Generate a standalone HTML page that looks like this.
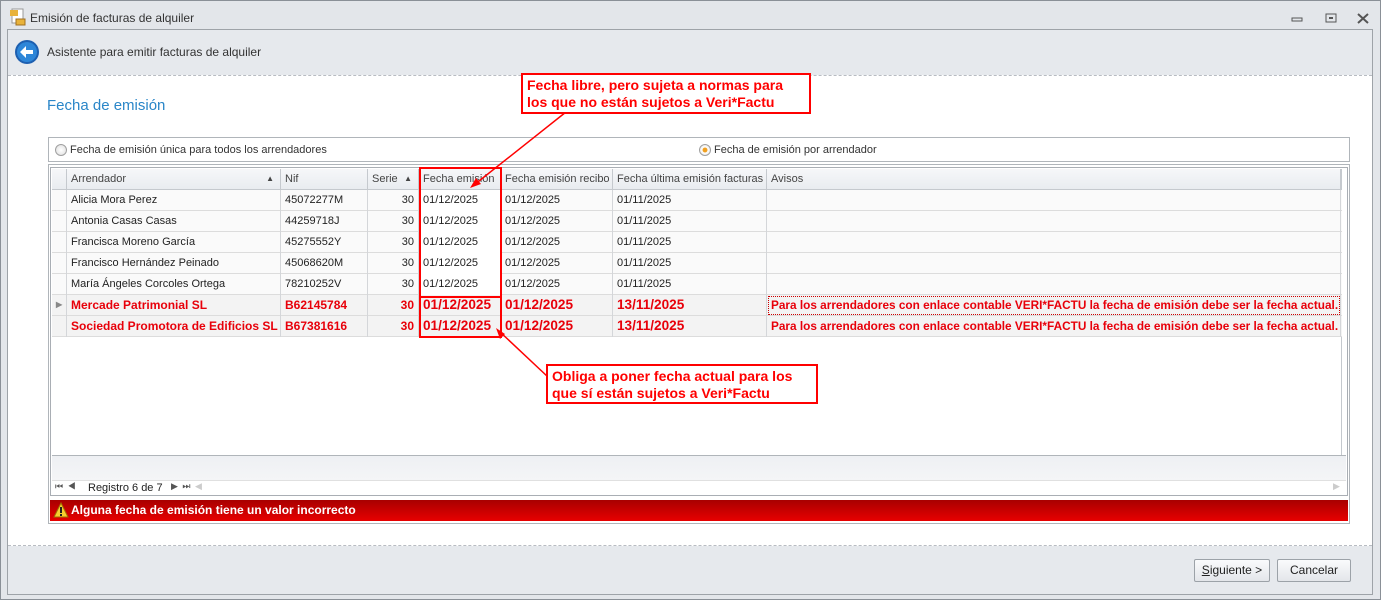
<!DOCTYPE html>
<html><head><meta charset="utf-8"><style>
*{box-sizing:border-box;margin:0;padding:0}
body{width:1381px;height:600px;overflow:hidden;background:#e6e9ed;font-family:"Liberation Sans",sans-serif;font-size:11px;color:#222;position:relative}
.abs{position:absolute}
#win{left:0;top:0;width:1381px;height:600px;border:1px solid #8a9097;background:#e3e6ea}
.title{left:30px;top:11px;font-size:12px;color:#333}
#inner{left:7px;top:29px;width:1366px;height:566px;border:1px solid #9ea3a8;background:#e6e9ed}
#content{left:8px;top:75px;width:1364px;height:471px;background:#fff;border-top:1px dashed #b8bcc2;border-bottom:1px dashed #b8bcc2}
.h1{left:47px;top:97px;font-size:15px;color:#2a86c8}
.radiobox{left:48px;top:137px;width:1302px;height:25px;border:1px solid #b0b5ba;background:#fff}
.radio{width:12px;height:12px;border-radius:50%;border:1px solid #a0a0a0;background:radial-gradient(#fff,#ddd)}
#grid{left:50px;top:167px;width:1298px;height:329px;border:1px solid #a9aeb4;background:#fff}
.hdr{left:52px;top:169px;width:1290px;height:21px;background:linear-gradient(#f6f7f9,#e9ecf0);border-bottom:1px solid #c5c9ce}
.c{position:absolute;height:21px;line-height:20px;padding-left:4px;border-right:1px solid #d4d6d9;white-space:nowrap;overflow:hidden}
.hdr .c{color:#444;border-right:1px solid #c5c9ce}
.row{position:absolute;left:52px;width:1290px;height:21px;border-bottom:1px solid #dcdcdc;background:#fafafa}
.red{color:#e8000a;font-weight:bold;background:#f3f3f3;font-size:12px}
.red .d{font-size:13.6px}
.red .av{font-size:11.8px}
.r{text-align:right;padding-right:4px}
.note{border:2px solid #f00;background:#fff;color:#f00;font-weight:bold;font-size:14px;line-height:17px;padding:2px 4px}
.btn{height:23px;border:1px solid #9ca2a8;border-radius:2px;background:linear-gradient(#fafbfc,#e3e6ea);text-align:center;line-height:21px;font-size:12px;color:#222}
</style></head><body>
<div id="win" class="abs"></div>
<svg class="abs" style="left:10px;top:8px" width="16" height="18"><rect x="2" y="1" width="11" height="14" fill="#fff" stroke="#999"/><rect x="0" y="2" width="8" height="6" fill="#e8b23a"/><rect x="6" y="11" width="9" height="6" fill="#e8b23a" stroke="#a07020"/></svg>
<div class="abs title">Emisión de facturas de alquiler</div>
<svg class="abs" style="left:1290px;top:13px" width="80" height="12"><rect x="2" y="5" width="10" height="3" fill="none" stroke="#555"/><rect x="36" y="1" width="10" height="8" fill="none" stroke="#555"/><rect x="39" y="4" width="4" height="2" fill="#555"/><path d="M68 1l10 9M78 1l-10 9" stroke="#555" stroke-width="2"/></svg>
<div id="inner" class="abs"></div>
<svg class="abs" style="left:14px;top:39px" width="26" height="26"><circle cx="13" cy="13" r="12" fill="#1d5fb0"/><circle cx="13" cy="13" r="10" fill="#2d86d8"/><path d="M6 13l6-6v4h7v4h-7v4z" fill="#fff"/></svg>
<div class="abs" style="left:47px;top:45px;font-size:12px;color:#333">Asistente para emitir facturas de alquiler</div>
<div id="content" class="abs"></div>
<div class="abs h1">Fecha de emisión</div>
<div class="abs radiobox"></div>
<div class="abs radio" style="left:55px;top:144px"></div>
<div class="abs" style="left:70px;top:144px;color:#333">Fecha de emisión única para todos los arrendadores</div>
<div class="abs radio" style="left:699px;top:144px;background:radial-gradient(#f0a020 30%,#fff 40%,#ddd)"></div>
<div class="abs" style="left:714px;top:144px;color:#333">Fecha de emisión por arrendador</div>
<div id="grid" class="abs"></div>
<div class="abs hdr">
<div class="c" style="left:0;width:15px"></div>
<div class="c" style="left:15px;width:214px">Arrendador<span style="position:absolute;right:6px;font-size:8px">▲</span></div>
<div class="c" style="left:229px;width:87px">Nif</div>
<div class="c" style="left:316px;width:51px">Serie<span style="position:absolute;right:6px;font-size:8px">▲</span></div>
<div class="c" style="left:367px;width:82px">Fecha emisión</div>
<div class="c" style="left:449px;width:112px">Fecha emisión recibo</div>
<div class="c" style="left:561px;width:154px">Fecha última emisión facturas</div>
<div class="c" style="left:715px;width:574px">Avisos</div>
</div>
<div class="abs" style="left:1341px;top:169px;width:6px;height:286px;border-left:1px solid #c5c9ce"></div>

<div class="row" style="top:190px"><div class="c" style="left:0;width:15px"></div><div class="c" style="left:15px;width:214px">Alicia Mora Perez</div><div class="c" style="left:229px;width:87px">45072277M</div><div class="c r" style="left:316px;width:51px">30</div><div class="c" style="left:367px;width:82px;background:#fff">01/12/2025</div><div class="c" style="left:449px;width:112px">01/12/2025</div><div class="c" style="left:561px;width:154px">01/11/2025</div><div class="c" style="left:715px;width:574px"></div></div>
<div class="row" style="top:211px"><div class="c" style="left:0;width:15px"></div><div class="c" style="left:15px;width:214px">Antonia Casas Casas</div><div class="c" style="left:229px;width:87px">44259718J</div><div class="c r" style="left:316px;width:51px">30</div><div class="c" style="left:367px;width:82px;background:#fff">01/12/2025</div><div class="c" style="left:449px;width:112px">01/12/2025</div><div class="c" style="left:561px;width:154px">01/11/2025</div><div class="c" style="left:715px;width:574px"></div></div>
<div class="row" style="top:232px"><div class="c" style="left:0;width:15px"></div><div class="c" style="left:15px;width:214px">Francisca Moreno García</div><div class="c" style="left:229px;width:87px">45275552Y</div><div class="c r" style="left:316px;width:51px">30</div><div class="c" style="left:367px;width:82px;background:#fff">01/12/2025</div><div class="c" style="left:449px;width:112px">01/12/2025</div><div class="c" style="left:561px;width:154px">01/11/2025</div><div class="c" style="left:715px;width:574px"></div></div>
<div class="row" style="top:253px"><div class="c" style="left:0;width:15px"></div><div class="c" style="left:15px;width:214px">Francisco Hernández Peinado</div><div class="c" style="left:229px;width:87px">45068620M</div><div class="c r" style="left:316px;width:51px">30</div><div class="c" style="left:367px;width:82px;background:#fff">01/12/2025</div><div class="c" style="left:449px;width:112px">01/12/2025</div><div class="c" style="left:561px;width:154px">01/11/2025</div><div class="c" style="left:715px;width:574px"></div></div>
<div class="row" style="top:274px"><div class="c" style="left:0;width:15px"></div><div class="c" style="left:15px;width:214px">María Ángeles Corcoles Ortega</div><div class="c" style="left:229px;width:87px">78210252V</div><div class="c r" style="left:316px;width:51px">30</div><div class="c" style="left:367px;width:82px;background:#fff">01/12/2025</div><div class="c" style="left:449px;width:112px">01/12/2025</div><div class="c" style="left:561px;width:154px">01/11/2025</div><div class="c" style="left:715px;width:574px"></div></div>
<div class="row red" style="top:295px"><div class="c" style="left:0;width:15px;color:#888;font-size:8px">▶</div><div class="c" style="left:15px;width:214px">Mercade Patrimonial SL</div><div class="c" style="left:229px;width:87px">B62145784</div><div class="c r" style="left:316px;width:51px">30</div><div class="c d" style="left:367px;width:82px">01/12/2025</div><div class="c d" style="left:449px;width:112px">01/12/2025</div><div class="c d" style="left:561px;width:154px">13/11/2025</div><div class="c av" style="left:715px;width:574px;outline:1px dotted #c00;outline-offset:-2px">Para los arrendadores con enlace contable VERI*FACTU la fecha de emisión debe ser la fecha actual.</div></div>
<div class="row red" style="top:316px"><div class="c" style="left:0;width:15px"></div><div class="c" style="left:15px;width:214px">Sociedad Promotora de Edificios SL</div><div class="c" style="left:229px;width:87px">B67381616</div><div class="c r" style="left:316px;width:51px">30</div><div class="c d" style="left:367px;width:82px">01/12/2025</div><div class="c d" style="left:449px;width:112px">01/12/2025</div><div class="c d" style="left:561px;width:154px">13/11/2025</div><div class="c av" style="left:715px;width:574px">Para los arrendadores con enlace contable VERI*FACTU la fecha de emisión debe ser la fecha actual.</div></div>

<div class="abs" style="left:52px;top:455px;width:1294px;height:25px;border-top:1px solid #b0b5ba;background:linear-gradient(#eef0f3,#f4f5f7)"></div>
<div class="abs" style="left:52px;top:480px;width:1294px;height:15px;background:#fff;border-top:1px solid #e0e0e0"></div>
<div class="abs" style="left:55px;top:481px;font-size:9px;color:#555;letter-spacing:1px">⏮ ◀</div>
<div class="abs" style="left:88px;top:482px;font-size:11px">Registro 6 de 7</div>
<div class="abs" style="left:171px;top:481px;font-size:9px;color:#555;letter-spacing:1px">▶ ⏭ <span style="color:#ccc">◀</span></div>
<div class="abs" style="left:1333px;top:481px;font-size:9px;color:#ccc">▶</div>
<div class="abs" style="left:50px;top:500px;width:1298px;height:21px;background:linear-gradient(#a80000,#e80000);color:#fff;font-weight:bold;font-size:12px;line-height:20px;padding-left:21px">Alguna fecha de emisión tiene un valor incorrecto</div>
<svg class="abs" style="left:53px;top:502px" width="16" height="16"><path d="M8 1L15 15H1z" fill="#f6d030" stroke="#a07000"/><rect x="7" y="5" width="2" height="6" fill="#222"/><rect x="7" y="12" width="2" height="2" fill="#222"/></svg>
<div class="abs" style="left:48px;top:164px;width:1302px;height:360px;border:1px solid #b0b5ba"></div>

<div class="abs" style="left:419px;top:167px;width:83px;height:171px;border:2px solid #f00"></div>
<div class="abs" style="left:419px;top:296px;width:83px;height:2px;background:#f00"></div>
<svg class="abs" style="left:0;top:0" width="1381" height="600"><path d="M566 112L474 185" stroke="#f00" stroke-width="1.5"/><path d="M470 188l11-4-5-6z" fill="#f00"/><path d="M548 377L499 331" stroke="#f00" stroke-width="1.5"/><path d="M496 328l4 11 5-5z" fill="#f00"/></svg>
<div class="abs note" style="left:521px;top:73px;width:290px;height:41px">Fecha libre, pero sujeta a normas para los que no están sujetos a Veri*Factu</div>
<div class="abs note" style="left:546px;top:364px;width:272px;height:40px">Obliga a poner fecha actual para los que sí están sujetos a Veri*Factu</div>

<div class="abs btn" style="left:1194px;top:559px;width:76px"><u>S</u>iguiente &gt;</div>
<div class="abs btn" style="left:1277px;top:559px;width:74px">Cancelar</div>
</body></html>
